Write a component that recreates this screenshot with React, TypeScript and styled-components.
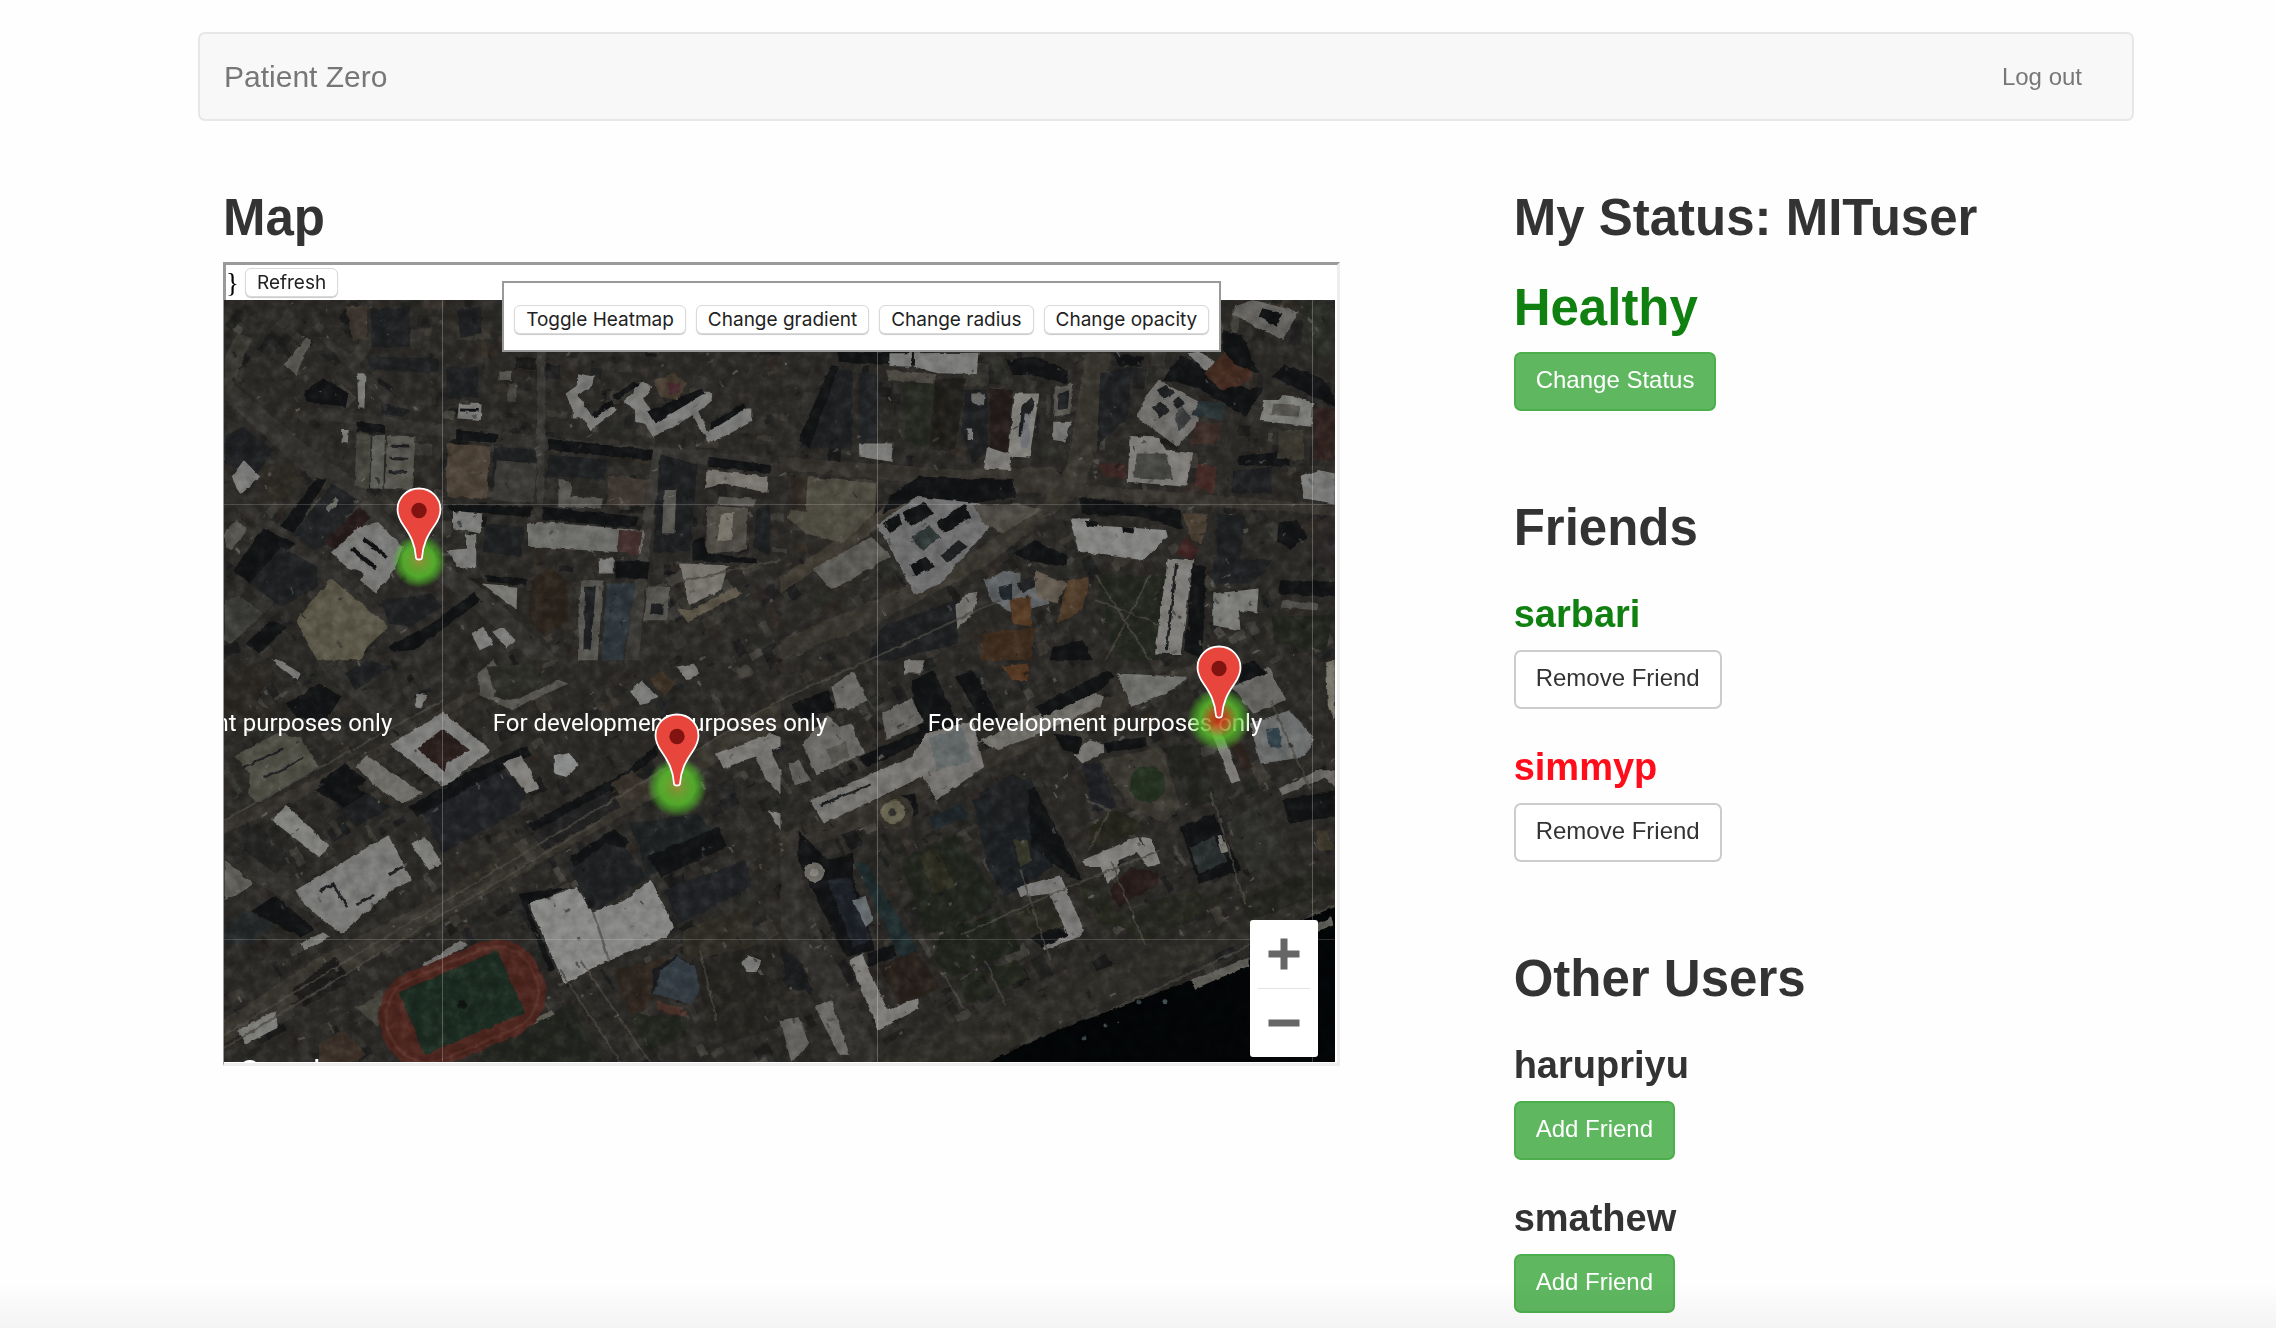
import React from 'react';
import styled, { createGlobalStyle } from 'styled-components';

const sans = `"Liberation Sans", Arial, sans-serif`;

const GlobalStyle = createGlobalStyle`
  *, *::before, *::after { box-sizing: border-box; }
  body { margin: 0; background: #fefefe; color: #333; font-family: ${sans}; font-size: 24px; }
  h1, h2, h3, p { margin: 0; }
`;

const Page = styled.div`
  min-height: 100vh;
  padding: 32px 142px 15px 198px;
`;

const Navbar = styled.nav`
  display: flex;
  align-items: center;
  justify-content: space-between;
  height: 89px;
  padding: 0 50px 0 24px;
  border: 2px solid #e7e7e7;
  border-radius: 7px;
  background: #f8f8f8;
`;

const NavLink = styled.a<{ $brand?: boolean }>`
  color: #777;
  font-size: ${p => (p.$brand ? 30 : 24)}px;
  text-decoration: none;
`;

const Columns = styled.main`
  display: grid;
  grid-template-columns: 2fr 1fr;
  padding-top: 69px;
`;

const Column = styled.div`
  min-width: 0;
  padding: 0 25px;
`;

const Section = styled.section`
  margin-bottom: 89px;
  &:last-child { margin-bottom: 0; }
`;

const Heading = styled.h2`
  font-size: 51px;
  line-height: 56px;
  font-weight: 700;
`;

const HealthState = styled.p`
  margin: 34px 0 16px;
  color: #108010;
  font-size: 51px;
  line-height: 56px;
  font-weight: 700;
`;

const Person = styled.div`
  margin-top: 37px;
`;

const PersonName = styled.h3<{ $color?: string }>`
  margin-bottom: 15px;
  color: ${p => p.$color ?? '#333'};
  font-size: 38px;
  line-height: 42px;
  font-weight: 700;
`;

const Button = styled.button<{ $success?: boolean }>`
  display: block;
  padding: 10px 20px 13px;
  border: 2px solid ${p => (p.$success ? '#4cae4c' : '#ccc')};
  border-radius: 7px;
  background: ${p => (p.$success ? '#5fb760' : '#fff')};
  color: ${p => (p.$success ? '#fff' : '#333')};
  font-family: ${sans};
  font-size: 24px;
  line-height: 32px;
  cursor: pointer;
`;

const MapFrame = styled.div`
  position: relative;
  width: 90%;
  margin-top: 16px;
  padding: 0 2px 1px 0;
  overflow: hidden;
  border: 3px solid;
  border-left-width: 1px;
  border-color: #9a9a9a #eee #eee #9a9a9a;
  background: #fff;
`;

const FrameTop = styled.div`
  display: flex;
  align-items: center;
  gap: 6px;
  height: 35px;
  border-left: 2px solid #9a9a9a;
  color: #000;
  font-family: "Liberation Serif", "Times New Roman", serif;
  font-size: 27px;
  line-height: 32px;
`;

const SmallButton = styled.button`
  height: 29px;
  padding: 0 11px;
  border: 1px solid #d9d9d9;
  border-radius: 6px;
  background: #fff;
  box-shadow: 0 1px 1px rgba(0, 0, 0, 0.22);
  color: #222;
  font-family: Inter, sans-serif;
  font-size: 19px;
  line-height: 27px;
  white-space: nowrap;
`;

const FloatingPanel = styled.div`
  position: absolute;
  z-index: 4;
  top: 16px;
  left: 25%;
  display: flex;
  gap: 10px;
  padding: 22px 10px 16px;
  border: 2px solid #999;
  background: #fff;
`;

const MapView = styled.div`
  position: relative;
  height: 762px;
  overflow: hidden;
  background: #2c2a27;
`;

const Imagery = styled.svg`
  display: block;
  width: 100%;
  height: 100%;
`;

const Tiles = styled.div`
  position: absolute;
  top: -230px;
  left: -216px;
  display: grid;
  grid-template-columns: repeat(4, 435px);
  grid-auto-rows: 435px;
`;

const Tile = styled.div`
  display: flex;
  align-items: center;
  justify-content: center;
  padding-top: 2px;
  border-right: 1px solid rgba(255, 255, 255, 0.24);
  border-bottom: 1px solid rgba(255, 255, 255, 0.16);
  color: #fff;
  font-family: Roboto, sans-serif;
  font-size: 24px;
  line-height: 28px;
`;

const MapPoint = styled.div<{ $x: number; $y: number }>`
  position: absolute;
  left: ${p => p.$x}px;
  top: ${p => p.$y}px;
  width: 0;
  height: 0;
`;

const Heat = styled.div<{ $size: number; $hot?: string }>`
  position: absolute;
  top: ${p => -p.$size / 2}px;
  left: ${p => -p.$size / 2}px;
  width: ${p => p.$size}px;
  height: ${p => p.$size}px;
  border-radius: 50%;
  background: radial-gradient(circle closest-side, ${p => p.$hot ?? 'rgba(175,165,60,.8) 0%, rgba(118,190,50,.78) 28%'}, rgba(92, 205, 44, 0.78) 58%, rgba(88, 215, 42, 0.42) 80%, rgba(88, 215, 42, 0) 100%);
`;

const Pin = styled.svg`
  position: absolute;
  left: -23px;
  bottom: 0;
  width: 46px;
  height: 74px;
`;

const Watermark = styled.span`
  position: absolute;
  left: 15px;
  top: 754px;
  color: #fff;
  font-family: Roboto, sans-serif;
  font-size: 31px;
  line-height: 36px;
`;

const ZoomControl = styled.div`
  position: absolute;
  right: 17px;
  bottom: 5px;
  width: 68px;
  padding: 0 8px;
  border-radius: 3px;
  background: #fff;
`;

const ZoomButton = styled.button`
  display: flex;
  align-items: center;
  justify-content: center;
  width: 100%;
  height: 68px;
  padding: 0;
  border: 0;
  background: transparent;
  & + & { border-top: 1px solid #e3e3e3; height: 69px; }
`;

const BottomShade = styled.div`
  position: fixed;
  inset: auto 0 0 0;
  height: 44px;
  background: linear-gradient(rgba(0, 0, 0, 0), rgba(0, 0, 0, 0.04));
  pointer-events: none;
`;

/* ---- aerial imagery ---- */

type Shape = [string, string];

const L = '#7a7a79';
const M = '#565550';
const D = '#121314';
const K = '#1e2022';

const northWest: Shape[] = [
  ['#35332f', '40,380 300,610 420,700 560,870 760,1010 980,1230 900,1230 700,1040 520,900 300,700 40,450'],
  ['#34322e', '300,470 560,510 930,560 1568,620 1568,660 930,600 560,550 330,510'],
  ['#32302d', '40,700 150,790 340,950 540,1120 640,1230 580,1230 300,980 40,745'],
  ['#3c3a36', '1240,600 1262,600 1230,900 1200,1230 1160,1230 1200,900'],
  ['#3a3834', '915,300 940,300 935,760 915,760'], ['#34322e', '300,260 330,260 560,480 520,490'],
  ['#3b3933', '75,250 120,265 90,340 60,420 42,390 42,320'], [M, '205,345 270,262 286,270 240,375'],
  [D, '265,420 320,385 388,430 380,470 270,455'], [L, '412,370 435,370 432,475 415,475'],
  [K, '440,320 640,325 640,370 445,360'], [K, '480,460 560,480 540,500 480,490'],
  [K, '660,350 750,350 750,440 660,440'], [L, '697,460 760,462 758,510 692,505'], [D, '700,475 752,477 752,485 700,484'], [M, '810,362 845,362 845,390 810,390'],
  ['#3d362f', '380,170 440,170 440,270 400,270'], [K, '450,175 560,175 560,290 450,290'], [K, '690,180 760,170 760,250 700,260'],
  [L, '1030,370 1075,380 1070,405 1030,435 1070,500 1120,465 1140,480 1065,540 1045,505 1015,505 1015,480 995,430 1030,405'],
  [L, '1155,455 1185,430 1190,400 1215,395 1238,410 1215,445 1250,510 1370,425 1400,425 1405,455 1310,525 1240,560 1215,520 1190,515 1190,480'],
  [L, '1345,485 1360,470 1395,545 1490,475 1515,475 1515,515 1455,550 1395,578'],
  [D, '1125,440 1185,395 1205,400 1140,450'], [D, '1225,485 1375,415 1385,430 1245,520'], [D, '1400,520 1490,460 1500,475 1405,540'], [D, '1070,490 1125,450 1130,465 1075,505'],
  ['#453a2f', '1240,390 1300,370 1335,400 1310,450 1260,440'], ['#4b2b32', '1280,400 1315,400 1315,430 1285,435'],
  [D, '410,515 490,525 490,550 410,545'], [L, '370,540 388,540 385,580 368,578'],
  ['#46463f', '410,550 450,552 445,715 405,710'], ['#5a5b54', '455,555 490,555 485,715 448,715'], ['#56564e', '495,558 575,562 565,720 490,715'],
  [K, '505,580 560,583 558,592 504,590'], [K, '502,620 556,623 554,632 501,630'], [K, '500,660 552,663 550,672 499,670'],
  [D, '690,540 805,552 800,578 688,570'], ['#4c4237', '665,582 785,588 775,745 662,740'], [K, '795,590 915,600 912,690 790,680'],
  ['#3c3a36', '800,630 915,640 905,760 790,750'], [D, '945,565 1240,600 1235,630 1130,620 945,600'], [K, '950,615 1110,628 1105,690 940,680'],
  [M, '975,690 1010,695 1010,740 1100,745 1095,775 975,770'], ['#403832', '1115,680 1230,690 1215,770 1110,765'],
  [K, '42,560 90,530 180,600 130,670 42,640'], [L, '60,680 95,630 140,680 85,735'], ['#2d2a24', '140,650 230,640 265,690 190,760 150,740'],
  [D, '205,820 300,680 325,690 235,850 195,825'], ['#212325', '235,850 340,700 420,750 330,880 290,900'],
  ['#6a6a65', '325,775 352,740 362,748 335,790'], ['#251b1a', '315,880 420,770 450,800 360,900'],
  [M, '42,840 75,810 105,840 60,900 42,890'], [D, '65,960 150,835 240,880 110,1000'], [K, '110,1000 200,890 300,950 300,1010 200,1070'],
  [L, '340,905 420,830 470,815 540,890 520,950 465,1030 420,990 430,970 380,950'], [D, '400,890 470,950 462,960 392,900'], [D, '430,860 500,915 492,925 424,872'],
  ['#5a5748', '240,1110 340,985 500,1130 440,1190 420,1230 300,1230'],
  [L, '680,780 762,785 758,850 680,835'], [L, '665,900 720,895 712,850 745,855 745,955 690,950'],
  [D, '665,762 905,772 895,800 670,782'], [D, '930,770 1200,800 1190,832 930,810'], ['#6d6d69', '890,825 920,815 1150,835 1215,845 1205,910 890,890'],
  ['#422f2d', '1145,840 1210,845 1200,915 1140,905'], [K, '770,820 880,830 870,920 765,905'],
  [D, '770,975 885,985 885,1005 780,995'], ['#777772', '762,1000 860,1010 858,1080'], ['#2b241d', '900,990 950,950 1005,1000 1000,1110 940,1160 890,1110'],
  [L, '1088,925 1130,925 1130,970 1088,970'], [D, '1135,930 1230,935 1225,985 1135,985'], [M, '1040,990 1100,990 1085,1230 1030,1230 1030,1100'], [K, '1050,1010 1080,1010 1065,1200 1045,1200'],
  ['#2e363b', '1110,1000 1190,1000 1155,1230 1095,1230'], [K, '1260,615 1365,640 1345,900 1240,910'], [M, '1270,720 1305,720 1300,850 1265,850'],
  ['#77756e', '1390,660 1563,680 1560,728 1440,700 1385,715'], [D, '1395,620 1568,645 1568,670 1395,650'], [M, '1425,740 1530,745 1520,770 1420,765'],
  ['#4e4c45', '1388,765 1505,775 1500,900 1390,910'], ['#7b766b', '1430,790 1465,785 1460,870 1420,875'], [K, '1530,780 1568,760 1568,920 1520,890'],
  [D, '1350,870 1385,860 1390,910 1530,925 1530,940 1350,930'], ['#77756d', '1315,940 1450,945 1430,1020 1340,1065'], ['#5d574a', '1310,1075 1350,1080 1470,1010 1490,1030 1335,1115'],
  [M, '1225,1010 1285,1010 1280,1110 1215,1110'], [K, '1235,1060 1270,1060 1268,1090 1232,1090'], [K, '480,1050 620,1030 650,1070 560,1130 500,1120'], [D, '500,1190 620,1120 740,1025 760,1050 570,1200 510,1205'],
  [L, '730,1150 765,1130 795,1180 755,1200'], [L, '790,1145 820,1130 855,1170 830,1195'], ['#3c3c39', '42,1050 80,1035 150,1090 60,1180 42,1170'], [D, '100,1180 170,1110 215,1130 140,1210'],
];

const northEast: Shape[] = [
  ['#37342f', '0,620 500,660 750,650 800,700 1568,770 1568,800 800,740 0,660'], ['#393630', '840,310 910,310 870,600 830,720 740,800 560,950 300,1100 0,1230 0,1170 280,1040 540,900 720,760 790,640'],
  ['#3f3b33', '0,980 250,800 370,700 400,720 250,850 0,1030'],
  [D, '160,305 380,305 370,345 160,335'], [L, '300,310 365,310 360,350 300,348'], [L, '370,310 545,308 540,372 430,370 370,350'], ['#4b4941', '290,360 430,372 420,402 300,390'],
  [D, '620,330 700,318 790,360 790,400 690,375 640,375'], [K, '55,590 140,350 200,365 195,600'], [D, '50,570 140,345 160,350 80,595'], ['#212325', '215,370 270,372 265,580 215,575'],
  ['#262922', '340,400 420,400 410,600 345,570'], ['#201f1b', '425,390 510,385 480,600 410,600'], [K, '505,420 570,420 570,600 530,640 500,550'],
  ['#6a6a68', '525,430 562,430 560,465 525,460'], [L, '515,535 530,535 530,570 515,570'],
  ['#241c1b', '575,415 640,420 625,615 575,595'], ['#81807b', '645,430 712,430 685,622 625,620'], [K, '660,470 690,440 700,460 668,560 655,560'], ['#6f7377', '672,490 690,490 680,595 660,590'],
  [M, '755,410 805,400 800,490 750,500'], [K, '765,430 795,420 790,475 762,480'], [L, '750,515 805,515 790,540 785,575 750,570'], [L, '216,580 310,580 305,635 218,620'], ['#7b7a77', '568,590 635,615 632,660 560,655'],
  [K, '880,370 970,350 955,500 870,590'], [D, '915,310 1000,320 990,350 930,345'],
  ['#706f6c', '1040,390 1150,455 1150,520 1090,590 980,500 1010,430'], [K, '1035,420 1060,405 1085,428 1055,450'], [K, '1020,470 1045,455 1070,480 1045,505'], ['#3c3e40', '1085,490 1105,470 1130,505 1095,545'], [K, '1075,455 1095,440 1115,460 1092,478'],
  ['#2a3335', '1150,455 1225,460 1215,510 1130,495'], [D, '1050,390 1100,315 1180,360 1290,420 1330,410 1280,500 1230,470 1160,420 1090,395'],
  [L, '1120,310 1150,305 1210,345 1205,370 1165,360'], ['#432b21', '1165,370 1220,310 1300,345 1290,395 1210,420'],
  [D, '1215,240 1270,255 1315,370 1250,345 1216,300'], ['#63625f', '1250,165 1300,150 1425,185 1380,270 1245,195'], [D, '1325,175 1380,190 1365,230 1315,200'],
  ['#2b2d27', '1430,160 1524,160 1524,330 1460,310'], [D, '1350,380 1385,345 1490,385 1524,440 1524,470 1430,420'], ['#7b7b78', '1330,450 1370,450 1380,435 1420,440 1465,460 1460,530 1318,512'],
  [M, '1355,460 1430,465 1425,500 1350,495'], ['#302320', '1470,470 1524,475 1524,630 1465,630'], ['#3b2c27', '1145,515 1215,520 1200,580 1125,585'],
  ['#7d7c79', '960,558 1040,562 1060,600 1135,610 1115,710 955,695'], ['#454541', '980,610 1060,610 1080,690 970,685'], ['#3d2825', '870,640 950,640 950,690 890,680'], ['#442b27', '1145,640 1200,650 1190,730 1140,710'],
  [D, '1260,615 1400,600 1400,650 1260,645'], [K, '1245,665 1350,650 1350,730 1240,730'], [L, '1430,680 1480,660 1524,670 1524,760 1440,745'],
  ['#3a382f', '1370,540 1440,540 1440,630 1365,625'],
  ['#4e4b41', '75,680 265,700 260,790 170,880 70,850 20,800'], ['#302a25', '25,675 75,680 70,785 30,780'], [D, '300,740 380,680 640,690 650,740 530,760 380,740 280,790'],
  ['#6e6f6e', '265,825 375,740 550,760 600,800 440,1000 370,1035 340,970'], [D, '335,790 395,755 420,790 360,830'], [D, '282,820 325,790 335,820 300,850'], [D, '430,820 505,760 525,800 450,850'], ['#2f3836', '360,860 410,825 440,860 390,905'], [D, '355,945 400,920 425,950 370,980'], [K, '440,915 490,870 515,890 460,940'],
  ['#4f4c45', '530,765 650,760 720,780 610,850 560,820'], ['#5d5b55', '90,955 250,860 305,920 140,1020'],
  [D, '820,740 1100,780 1105,840 990,800 830,790'], ['#838482', '795,805 850,805 850,825 1060,840 1065,860 1000,930 820,905'], [D, '840,812 875,818 870,832 842,828'], [D, '940,830 975,835 970,850 942,845'], ['#4c4235', '1105,790 1175,790 1160,880 1130,870'],
  [K, '1200,790 1280,800 1260,950 1200,930'], ['#2b2827', '1480,820 1524,830 1524,960 1470,950'], [D, '1370,820 1420,810 1450,860 1400,900 1365,870'],
  [D, '640,910 700,870 790,920 780,950 680,930'], ['#606365', '560,990 620,960 660,970 660,1020 720,1000 740,1060 640,1090 580,1050'], ['#553b25', '630,1050 690,1040 690,1130 640,1120'], ['#62594f', '700,960 790,1000 760,1060 700,1040'], ['#74736f', '455,1100 510,1030 545,1025 530,1090 480,1140'],
  ['#4f3c2a', '790,990 850,980 830,1080 760,1120'], ['#20262b', '600,1010 640,1000 640,1050 605,1045'], ['#3e2d1f', '560,1150 700,1130 690,1230 550,1230'], [K, '650,1000 690,980 700,1010 665,1030'],
  ['#242620', '865,970 1060,980 1040,1230 920,1230'], ['#7f7e7b', '1065,925 1135,930 1100,1212 1030,1210'], [K, '1085,940 1092,940 1065,1200 1058,1200'], [D, '1135,940 1170,950 1160,1230 1110,1200'], ['#3c2321', '1085,910 1115,860 1150,900 1130,930'],
  [K, '1190,920 1350,930 1300,1000 1190,1000'], ['#7b7b78', '1190,1030 1315,1015 1310,1090 1260,1080 1265,1140 1190,1125'], [D, '1370,990 1524,995 1524,1040 1370,1030'], ['#4e4d4a', '1380,1050 1480,1062 1475,1080 1375,1072'], ['#22261f', '1350,1100 1524,1095 1500,1200 1360,1180'],
  [K, '280,1130 480,1050 490,1180 300,1230 240,1230'], [D, '750,1190 830,1170 860,1230 740,1230'],
];

const southWest: Shape[] = [
  ['#37342f', '40,480 300,350 530,220 700,100 760,90 560,230 300,390 40,520'],
  ['#393630', '40,1080 300,890 640,700 1000,480 1568,120 1568,200 1000,550 640,780 300,980 40,1150'],
  ['#34322e', '120,580 380,740 400,770 340,800 100,650'], ['#34322e', '350,20 660,260 880,430 840,470 600,290 330,60'],
  ['#2b2723', '40,60 110,0 170,20 130,130 200,170 130,210 40,130'], [D, '210,130 300,70 360,110 320,180 240,175'], [K, '370,40 430,0 500,20 400,90'], [L, '170,0 190,0 250,40 240,60'],
  ['#4f4e44', '65,290 190,215 250,235 300,320 130,430 105,400 110,340'], [K, '90,318 200,262 202,268 92,325'], [K, '145,350 255,292 258,298 148,357'], [L, '600,105 570,100 560,140 580,145'],
  ['#7d7d7b', '495,255 640,155 770,270 690,340 660,370 635,375'], ['#2a1f1d', '570,265 640,205 715,270 650,310 645,335'],
  ['#6f6e68', '400,320 430,285 585,400 530,430 480,400'], [D, '300,365 370,310 430,360 380,400'],
  ['#202225', '580,450 800,320 870,400 850,450 640,580'], [D, '545,440 700,340 870,255 880,285 700,390 570,470'], ['#7f7e7b', '805,310 855,285 905,385 870,400'], ['#8a8b8b', '945,285 990,275 1010,315 980,350 945,340'],
  [M, '735,40 780,0 800,30 780,110 830,120 960,60 985,70 830,150 740,100'], ['#2d2e28', '760,20 900,10 920,60 830,110 780,90'], [D, '870,495 1150,330 1230,250 1230,285 1100,400 900,520'],
  ['#222121', '880,520 1100,390 1130,440 920,570'], ['#38322b', '1100,370 1160,330 1220,390 1150,430'],
  [K, '300,370 390,375 500,440 400,500'], ['#7f7f7c', '170,480 210,435 330,560 300,590'], ['#242422', '60,540 130,490 220,590 180,640'], [D, '290,390 350,350 430,400 370,440'],
  ['#7b7b79', '235,690 490,525 555,660 500,690 360,820 310,780 250,720'], [K, '490,640 530,615 533,622 494,648'], [K, '400,730 450,700 453,706 404,737'], [K, '300,690 340,665 380,740 374,742 336,676 303,697'],
  ['#7a7a77', '550,550 590,530 640,610 600,630'], ['#5f5e59', '40,600 120,670 80,700 40,720'],
  [D, '60,790 180,705 290,810 250,830 120,760'], ['#242728', '42,790 110,750 180,800 110,850 42,850'],
  ['#777774', '250,850 310,815 330,830 260,870'], ['#1e1d1c', '225,990 340,890 390,960 260,1040'], ['#7a7a77', '75,1110 180,1050 190,1100 100,1150'],
  ['#33302a', '650,690 850,550 880,590 800,640 660,720'], ['#3f3b35', '835,550 870,535 900,595 870,600'],
  ['#1f2123', '980,610 1110,510 1200,650 1070,750 1040,730'], [D, '990,590 1110,505 1150,545 1140,560 1090,550 1000,620'], ['#1e2222', '1150,490 1340,460 1420,560 1200,650 1180,560'], [D, '1200,590 1400,500 1420,560 1240,650'], ['#202225', '1250,690 1470,600 1490,680 1290,790'],
  ['#888886', '875,730 1005,680 1055,760 1095,900 975,972'], ['#858584', '1050,755 1140,720 1210,655 1275,800 1255,830 1095,900'], ['#5d5c59', '1050,755 1056,752 1100,898 1094,901'], [D, '848,700 985,680 870,735 950,930 930,930'], ['#1c1d1e', '1020,690 1050,700 1060,740 1040,745'],
  ['#2e261f', '1110,930 1260,890 1210,1030 1160,1080'], ['#2f2d25', '1300,810 1470,740 1500,860 1300,900'], ['#1a1b1d', '1215,1000 1220,930 1280,885 1340,920 1300,950'],
  ['#343c43', '1285,890 1335,920 1345,990 1320,1030 1220,1000 1240,930'], ['#493129', '1230,1020 1310,1050 1310,1070 1230,1050'], ['#23261f', '1160,1060 1310,1070 1310,1130 1200,1170'],
  ['#727271', '580,915 690,840 705,855 610,920'], ['#22251f', '745,1160 990,1030 1080,1206 745,1206'], ['#5f5e55', '790,1125 940,1050 945,1065 800,1135'], ['#3a3028', '300,1150 370,1110 430,1180 400,1206 300,1206'],
  ['#45443c', '400,1040 460,1010 480,1060 460,1100'], ['#262521', '1330,900 1540,850 1568,1100 1380,1160'], [L, '1460,910 1480,885 1515,900 1505,935 1475,935'],
  ['#7c7b77', '1390,280 1540,220 1568,230 1568,260 1410,325'], ['#72716e', '1490,270 1530,250 1568,330 1568,400 1530,360'], ['#7c7c7a', '1155,95 1185,60 1230,110 1185,135'], ['#3d3225', '1210,60 1240,30 1280,70 1250,110'], [L, '1280,20 1330,10 1345,40 1310,60'], [L, '1535,450 1568,460 1568,510'],
];

const southEast: Shape[] = [
  ['#35322d', '0,520 260,420 600,250 940,90 1140,10 1160,50 950,140 600,310 300,470 0,590'], ['#33312d', '0,600 40,560 100,800 200,1000 280,1206 200,1206 80,950 0,800'],
  ['#2f2d27', '250,1206 540,1060 900,920 1280,780 1524,690 1524,720 1300,830 980,990 540,1206'],
  [D, '30,130 130,90 150,150 60,180'], [D, '360,60 420,30 480,170 520,240 380,210'], ['#6b6a66', '140,80 200,35 240,120 185,150 155,140'], ['#676663', '280,160 360,115 395,185 290,240'], ['#757470', '340,0 400,0 385,40 340,40'],
  ['#6a6966', '60,250 130,165 160,200 195,190 230,280 100,345'], [M, '125,265 180,245 190,290 140,310'], ['#62615d', '20,310 50,300 85,360 40,375'], [D, '215,290 430,190 440,220 240,320'],
  ['#757471', '80,420 360,290 400,220 530,180 560,320 430,420 390,350 120,490'], ['#64696a', '410,230 500,205 530,300 430,330'], [K, '110,430 250,370 252,376 112,437'], ['#706f6a', '550,240 850,90 890,110 880,140 600,270'], [D, '700,140 900,30 920,50 880,90 720,170'],
  ['#6f6f6c', '925,40 1120,50 1080,90 965,140'], ['#553823', '610,20 680,10 680,60 640,60'], [D, '480,50 530,30 600,170 560,190'],
  [D, '310,410 370,400 380,460 350,480 350,440'], ['#1f262a', '410,470 500,430 520,470 420,510'],
  [D, '50,510 130,600 200,580 200,650 260,870 180,890 80,670 50,600'], ['#1d2127', '130,660 190,650 250,840 200,860'], ['#656b6e', '200,720 235,710 255,780 235,800'], ['#1f2b2d', '205,610 230,600 380,870 330,895'],
  ['#21251e', '330,600 480,520 600,720 470,810 400,820'], ['#2c2c20', '380,590 430,560 480,680 420,700'], ['#20241c', '440,820 610,750 660,870 470,950 420,890'],
  ['#1d2023', '530,420 690,350 750,620 620,710 570,620'], [K, '545,400 640,340 690,380 700,460 570,520'], ['#37372a', '640,540 680,540 690,600 660,620'], [D, '680,390 700,380 830,660 800,650 690,560'],
  ['#7a7977', '650,680 770,645 835,810 820,830 725,870 720,855 790,825 740,700 660,710'], ['#2a2a22', '640,760 740,720 780,800 690,840'], [D, '685,830 770,800 790,825 720,860'],
  ['#3a3831', '880,300 1050,260 1100,440 1060,490 960,440'], ['#1f2024', '830,310 880,310 925,440 860,455'], [D, '885,250 1000,230 1010,260 900,275'], ['#74736f', '805,280 850,240 890,250 890,275 830,310'],
  ['#232420', '1050,260 1150,250 1200,420 1130,440'], [D, '750,220 830,230 820,280 780,270'], ['#26261d', '850,500 920,450 1000,490 980,520 850,560'],
  ['#807f7c', '830,600 980,530 1000,560 990,530 1020,535 1045,610 1010,620 980,575 930,600 930,640 900,670 880,620 840,620'], ['#281d1b', '905,690 960,620 1040,640 1040,670 930,740'], ['#26271f', '820,660 900,690 950,800 880,790 830,710'],
  [D, '1100,500 1190,460 1270,630 1150,670'], ['#2a2f2f', '1125,560 1190,530 1230,600 1150,640'], ['#77756f', '1200,530 1215,525 1230,575 1215,580'], ['#2f2f2b', '1225,490 1310,430 1390,590 1290,640'],
  ['#676663', '1240,80 1340,20 1390,120 1300,160'], ['#7c7b78', '1180,200 1205,190 1265,360 1240,370'], ['#2d231e', '1210,200 1240,180 1300,320 1270,330'], ['#6c6d6d', '1290,190 1400,150 1470,240 1440,290 1320,310'], ['#33434b', '1335,210 1370,205 1380,260 1345,265'], [D, '1270,10 1300,0 1340,40 1260,70'],
  ['#686763', '1370,385 1480,330 1524,330 1524,380 1500,350 1380,405'], [D, '1380,420 1524,390 1524,470 1400,490'], ['#3b3629', '1470,510 1500,510 1524,570 1480,570'], ['#79766c', '1500,10 1524,0 1524,180 1505,140'],
  ['#26271f', '900,770 1120,690 1230,720 1000,850'], ['#24251e', '1260,720 1440,640 1524,650 1524,690 1290,780'],
  [D, '240,880 310,850 320,890 240,920'], ['#28211c', '270,920 370,870 440,980 330,1040'], ['#7c7b78', '190,900 225,880 295,1050 380,1010 380,1045 270,1110'], ['#24271e', '490,960 560,925 590,1000 510,1030'], ['#24271e', '580,925 650,900 680,950 600,990'],
  ['#1b1d1e', '0,860 60,910 90,1000 20,980'], ['#62615e', '0,1080 50,1070 80,1150 30,1206'], ['#6b6a67', '95,1040 140,1020 190,1180 160,1180'],
];

const river: Shape[] = [
  ['#030506', '540,1220 760,1110 1130,960 1290,890 1290,840 1540,735 1540,1220'], ['#5d5b55', '1130,960 1290,890 1290,915 1140,985'], ['#5d5b55', '1477,790 1515,770 1520,795 1477,815'],
];

const quadrants: { at: string; shapes: Shape[] }[] = [
  { at: 'translate(210 250) scale(.35714 .33333)', shapes: northWest },
  { at: 'translate(780 250) scale(.36364 .33333)', shapes: northEast },
  { at: 'translate(210 660) scale(.36364 .33333)', shapes: southWest },
  { at: 'translate(780 660) scale(.36364 .33333)', shapes: southEast },
];

function seeded(seed: number) {
  let s = seed;
  return () => {
    s = (s * 1664525 + 1013904223) % 4294967296;
    return s / 4294967296;
  };
}

const rand = seeded(41);
const groundTones = ['#17191b', '#1d1f1f', '#3a3833', '#44413b', '#25221f', '#2d2e29', '#352d27', '#504e48', '#121314'];

const ground = Array.from({ length: 1900 }, () => {
  const x = 215 + rand() * 1130;
  const y = 295 + rand() * 775;
  const south = y > 620 - (x - 224) * 0.12;
  return {
    x, y,
    w: 4 + rand() * 20,
    h: 3 + rand() * 11,
    angle: (south ? -30 : x < 400 ? 38 : 4) + (rand() < 0.5 ? 90 : 0),
    fill: groundTones[Math.floor(rand() * groundTones.length)],
    opacity: 0.25 + rand() * 0.45,
  };
});

const roofBits = Array.from({ length: 1400 }, () => ({
  x: 224 + rand() * 1110,
  y: 300 + rand() * 740,
  w: 1 + rand() * 6,
  h: 1 + rand() * 2,
  angle: rand() < 0.5 ? -30 : 60,
  fill: rand() < 0.6 ? '#141516' : '#7c7a74',
  opacity: 0.15 + rand() * 0.4,
}));

type Patch = (typeof ground)[number];
const Patches = ({ items }: { items: Patch[] }) => (
  <>
    {items.map((r, i) => (
      <rect key={i} width={r.w} height={r.h} fill={r.fill} opacity={r.opacity}
        transform={`translate(${r.x.toFixed(1)} ${r.y.toFixed(1)}) rotate(${r.angle})`} />
    ))}
  </>
);

const Region = ({ at, shapes }: { at: string; shapes: Shape[] }) => (
  <g transform={at}>
    {shapes.map(([fill, pts], i) => <polygon key={i} fill={fill} points={pts} />)}
  </g>
);

const Satellite = () => (
  <Imagery viewBox="224 300 1110 762" preserveAspectRatio="xMinYMin slice" aria-hidden="true">
    <defs>
      <filter id="grain" x="0" y="0" width="100%" height="100%" colorInterpolationFilters="sRGB">
        <feTurbulence type="fractalNoise" baseFrequency="0.09" numOctaves="4" seed="8" />
        <feColorMatrix values="1.4 0 0 0 -.2  1.4 0 0 0 -.2  1.4 0 0 0 -.2  0 0 0 0 1" />
      </filter>
      <filter id="rough" x="0" y="0" width="100%" height="100%" colorInterpolationFilters="sRGB">
        <feTurbulence type="fractalNoise" baseFrequency="0.12" numOctaves="2" seed="3" result="n" />
        <feDisplacementMap in="SourceGraphic" in2="n" scale="4" xChannelSelector="R" yChannelSelector="G" />
        <feGaussianBlur stdDeviation="0.6" />
      </filter>
    </defs>
    <rect x="224" y="300" width="1110" height="762" fill="#2b2926" />
    <g filter="url(#rough)">
      <rect x="200" y="280" width="1160" height="810" fill="#2c2a27" />
      <Patches items={ground} />
      {quadrants.map(q => <Region key={q.at} {...q} />)}
      <g fill="none" stroke="#4b4841" strokeWidth="2" opacity=".75">
        <path d="M224 1035L443 902L570 825L780 700L1000 600M224 1048L443 914L600 820M224 820L443 700M640 590L780 560M1095 575L1150 660M1150 575L1105 660M1095 600L1160 625M960 935L1060 890L1160 850M1000 1062L1334 905M940 970L965 1010M985 960L1005 1005M1085 800L1110 810L1088 850M1210 790L1245 905M1270 700L1310 790" />
        <path d="M580 960L650 1062M560 970L620 1062M700 950L716 1020M1020 870L1050 960M1110 860L1145 945" />
      </g>
      <Patches items={roofBits} />
      <g transform="translate(462 1004) rotate(-23)">
        <rect x="-85" y="-50" width="170" height="100" rx="46" fill="#4c261f" />
        <rect x="-78" y="-43" width="156" height="86" rx="40" fill="none" stroke="#593028" strokeWidth="3" />
        <rect x="-54" y="-36" width="108" height="68" fill="#1c2b21" />
        <circle r="5" fill="#101613" />
      </g>
      <circle cx="1147" cy="784" r="18" fill="#243020" />
      <circle cx="895" cy="812" r="18" fill="#35322b" />
      <circle cx="893" cy="812" r="12" fill="#65614f" />
      <circle cx="892" cy="812" r="4" fill="#34332f" />
      <circle cx="814" cy="872" r="10" fill="#6f6d66" />
      <circle cx="814" cy="872" r="4" fill="#8b8a85" />
      <Region at="translate(780 660) scale(.36364 .33333)" shapes={river} />
      <g fill="#3d474b">
        <circle cx="1105" cy="1025" r="2" /><circle cx="1083" cy="1038" r="2" /><circle cx="1165" cy="1001" r="2" /><circle cx="1139" cy="1002" r="2" /><circle cx="1118" cy="1022" r="1" />
      </g>
    </g>
    <rect x="224" y="300" width="1110" height="762" filter="url(#grain)" opacity=".25" style={{ mixBlendMode: 'soft-light' }} />
  </Imagery>
);

const points = [
  { name: 'West', x: 195, y: 261, heat: 54 },
  { name: 'Center', x: 453, y: 487, heat: 60 },
  { name: 'East', x: 995, y: 419, heat: 64, hot: 'rgba(200,50,20,.9) 0%, rgba(205,85,28,.85) 22%, rgba(150,150,38,.8) 42%' },
];

const people = {
  friends: [
    { name: 'sarbari', color: '#108010' },
    { name: 'simmyp', color: '#ff0d1b' },
  ],
  others: [{ name: 'harupriyu' }, { name: 'smathew' }],
};

const mapActions = ['Toggle Heatmap', 'Change gradient', 'Change radius', 'Change opacity'];

export default function App() {
  return (
    <Page>
      <GlobalStyle />
      <Navbar>
        <NavLink href="#home" $brand>Patient Zero</NavLink>
        <NavLink href="#logout">Log out</NavLink>
      </Navbar>
      <Columns>
        <Column>
          <Heading>Map</Heading>
          <MapFrame>
            <FrameTop>
              {'}'}
              <SmallButton type="button">Refresh</SmallButton>
            </FrameTop>
            <FloatingPanel>
              {mapActions.map(label => <SmallButton key={label} type="button">{label}</SmallButton>)}
            </FloatingPanel>
            <MapView>
              <Satellite />
              <Tiles>
                {Array.from({ length: 12 }, (_, i) => (
                  <Tile key={i}>{i >= 4 && i < 7 ? 'For development purposes only' : null}</Tile>
                ))}
              </Tiles>
              {points.map(p => (
                <MapPoint key={p.name} $x={p.x} $y={p.y}>
                  <Heat $size={p.heat} $hot={p.hot} />
                  <Pin viewBox="0 0 46 74" role="img" aria-label={p.name}>
                    <path
                      d="M23 1.5C11 1.5 1.5 10.8 1.5 22.5C1.5 28.5 4 33.5 7.5 38.5C14.5 48.5 19 57 20 70.5C20.2 73.2 25.8 73.2 26 70.5C27 57 31.5 48.5 38.5 38.5C42 33.5 44.5 28.5 44.5 22.5C44.5 10.8 35 1.5 23 1.5Z"
                      fill="#e8453c" stroke="#fff" strokeWidth="1.8"
                    />
                    <circle cx="23" cy="23.5" r="7.7" fill="#811411" />
                  </Pin>
                </MapPoint>
              ))}
              <Watermark>Google</Watermark>
              <ZoomControl>
                <ZoomButton type="button" aria-label="Zoom in">
                  <svg width="32" height="32" viewBox="0 0 32 32"><path d="M12.5 .5h7v12h12v7h-12v12h-7v-12h-12v-7h12z" fill="#666" /></svg>
                </ZoomButton>
                <ZoomButton type="button" aria-label="Zoom out">
                  <svg width="32" height="32" viewBox="0 0 32 32"><path d="M.5 12.500h31v7h-31z" fill="#666" /></svg>
                </ZoomButton>
              </ZoomControl>
            </MapView>
          </MapFrame>
        </Column>
        <Column>
          <Section>
            <Heading>My Status: MITuser</Heading>
            <HealthState>Healthy</HealthState>
            <Button type="button" $success>Change Status</Button>
          </Section>
          <Section>
            <Heading>Friends</Heading>
            {people.friends.map(p => (
              <Person key={p.name}>
                <PersonName $color={p.color}>{p.name}</PersonName>
                <Button type="button">Remove Friend</Button>
              </Person>
            ))}
          </Section>
          <Section>
            <Heading>Other Users</Heading>
            {people.others.map(p => (
              <Person key={p.name}>
                <PersonName>{p.name}</PersonName>
                <Button type="button" $success>Add Friend</Button>
              </Person>
            ))}
          </Section>
        </Column>
      </Columns>
      <BottomShade />
    </Page>
  );
}
